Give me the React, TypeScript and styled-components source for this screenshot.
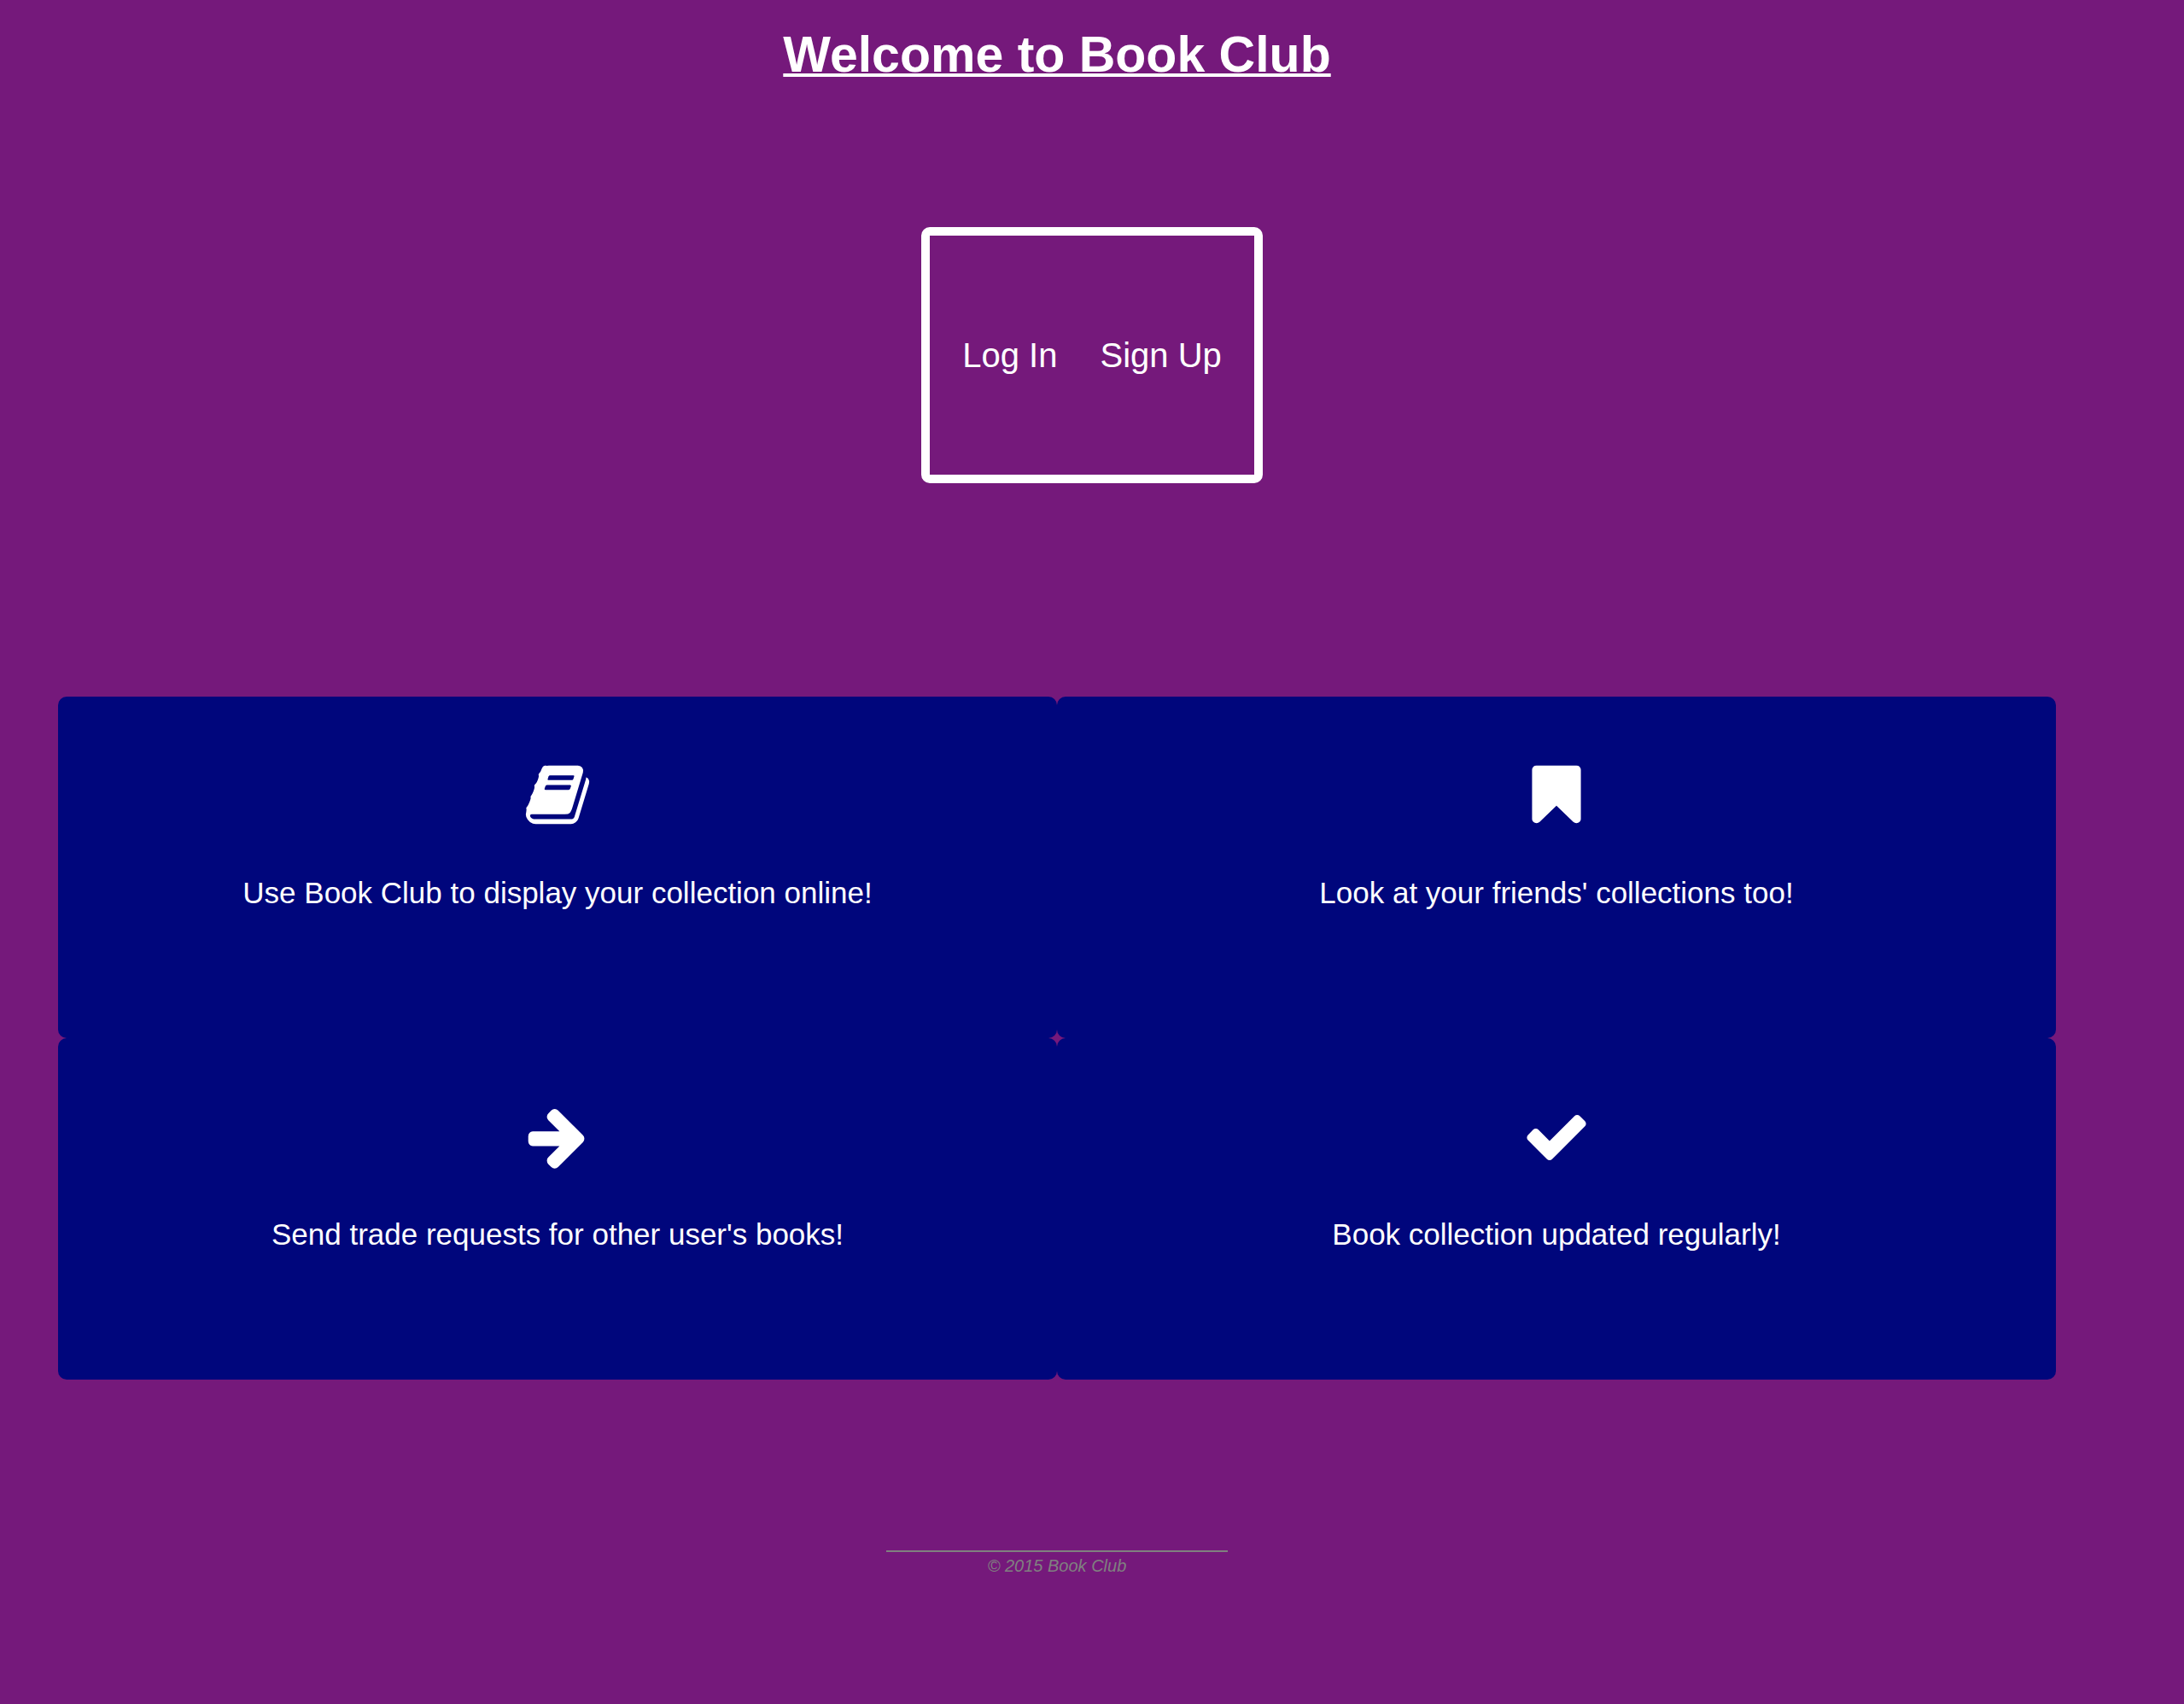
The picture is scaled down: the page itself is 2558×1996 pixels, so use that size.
import React from "react";
import styled, { createGlobalStyle } from "styled-components";

const GlobalStyle = createGlobalStyle`
  *, *::before, *::after {
    box-sizing: border-box;
  }

  body {
    margin: 0;
    background: #75197b;
    color: #fff;
    font-family: "Liberation Sans", Arial, Helvetica, sans-serif;
  }
`;

const Header = styled.header`
  padding: 30px 82px 0 0;
  text-align: center;
`;

const Title = styled.h1`
  margin: 0;
  font-size: 59px;
  line-height: 68px;
  font-weight: 700;
  text-decoration: underline;
  text-decoration-thickness: 4px;
  text-underline-offset: 2px;
  text-decoration-skip-ink: none;
`;

const AccountNav = styled.nav`
  display: flex;
  justify-content: center;
  align-items: center;
  gap: 50px;
  width: 400px;
  height: 300px;
  margin: 168px auto 250px;
  border: 10px solid #fff;
  border-radius: 10px;
`;

const NavLink = styled.a`
  color: #fff;
  font-size: 40px;
  line-height: 48px;
  text-decoration: none;
  white-space: nowrap;
`;

const Features = styled.main`
  display: grid;
  grid-template-columns: repeat(2, minmax(0, 1fr));
  padding: 0 150px 0 68px;
`;

const Card = styled.section`
  display: flex;
  flex-direction: column;
  align-items: center;
  gap: 55px;
  min-height: 400px;
  padding: 75px 20px;
  border-radius: 10px;
  background: #00067c;
`;

const Icon = styled.svg`
  width: 80px;
  height: 80px;
  fill: #fff;
`;

const CardText = styled.p`
  margin: 0;
  font-size: 35px;
  line-height: 40px;
  text-align: center;
`;

const Footer = styled.footer`
  padding: 200px 82px 80px 0;
`;

const Copyright = styled.p`
  width: 400px;
  margin: 0 auto;
  padding-top: 4px;
  border-top: 2px solid #808080;
  color: #808080;
  font-size: 20px;
  line-height: 24px;
  font-style: italic;
  text-align: center;
`;

const features = [
  {
    text: "Use Book Club to display your collection online!",
    path: "M1703 478q40 57 18 129l-275 906q-19 64-76.5 107.5t-122.5 43.5h-923q-77 0-148.5-53.5t-99.5-131.5q-24-67-2-127 0-4 3-27t4-37q1-8-3-21.5t-3-19.5q2-11 8-21t16.5-23.5 16.5-23.5q23-38 45-91.5t30-91.5q3-10 .5-30t-.5-28q3-11 17-28t17-23q21-36 42-92t25-90q1-9-2.5-32t.5-28q4-13 22-30.5t22-22.5q19-26 42.5-84.5t27.5-96.5q1-8-3-25.5t-2-26.5q2-8 9-18t18-23 17-21q8-12 16.5-30.5t15-35 16-36 19.5-32 26.5-23.5 36-11.5 47.5 5.5l-1 3q38-9 51-9h761q74 0 114 56t18 130l-274 906q-36 119-71.5 153.5t-128.5 34.5h-869q-27 0-38 15-11 16-1 43 24 70 144 70h923q29 0 56-15.5t35-41.5l300-987q7-22 5-57 38 15 59 43zm-1064 2q-4 13 2 22.5t20 9.5h608q13 0 25.5-9.5t16.5-22.5l21-64q4-13-2-22.5t-20-9.5h-608q-13 0-25.5 9.5t-16.5 22.5zm-83 256q-4 13 2 22.5t20 9.5h608q13 0 25.5-9.5t16.5-22.5l21-64q4-13-2-22.5t-20-9.5h-608q-13 0-25.5 9.5t-16.5 22.5z",
  },
  {
    text: "Look at your friends' collections too!",
    path: "M1420 128q23 0 44 9 33 13 52.5 41t19.5 62v1289q0 34-19.5 62t-52.5 41q-19 8-44 8-48 0-83-32l-441-424-441 424q-36 33-83 33-23 0-44-9-33-13-52.5-41t-19.5-62v-1289q0-34 19.5-62t52.5-41q21-9 44-9h1048z",
  },
  {
    text: "Send trade requests for other user's books!",
    path: "M1600 960q0 54-37 91l-651 651q-39 37-91 37-51 0-90-37l-75-75q-38-38-38-91t38-91l293-293h-704q-52 0-84.5-37.5t-32.5-90.5v-128q0-53 32.5-90.5t84.5-37.5h704l-293-294q-38-36-38-90t38-90l75-75q38-38 90-38 53 0 91 38l651 651q37 35 37 90z",
  },
  {
    text: "Book collection updated regularly!",
    path: "M1671 566q0 40-28 68l-724 724-136 136q-28 28-68 28t-68-28l-136-136-362-362q-28-28-28-68t28-68l136-136q28-28 68-28t68 28l294 295 656-657q28-28 68-28t68 28l136 136q28 28 28 68z",
  },
];

export default function App() {
  return (
    <>
      <GlobalStyle />
      <Header>
        <Title>Welcome to Book Club</Title>
      </Header>
      <AccountNav>
        <NavLink href="#login">Log In</NavLink>
        <NavLink href="#signup">Sign Up</NavLink>
      </AccountNav>
      <Features>
        {features.map((feature) => (
          <Card key={feature.text}>
            <Icon viewBox="0 0 1792 1792" aria-hidden="true">
              <path d={feature.path} />
            </Icon>
            <CardText>{feature.text}</CardText>
          </Card>
        ))}
      </Features>
      <Footer>
        <Copyright>© 2015 Book Club</Copyright>
      </Footer>
    </>
  );
}
